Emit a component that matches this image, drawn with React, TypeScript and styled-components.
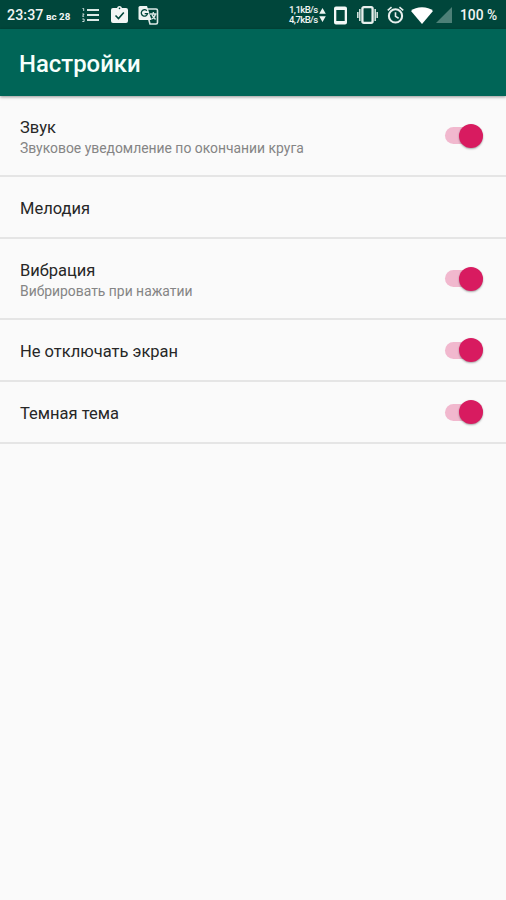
import React from "react";
import styled, { createGlobalStyle } from "styled-components";

const GlobalStyle = createGlobalStyle`
  * { box-sizing: border-box; }
  body { margin: 0; background: #fafafa; font-family: Roboto, sans-serif; }
`;

const Screen = styled.main`
  width: 506px;
  height: 900px;
  overflow: hidden;
  background: #fafafa;
`;

const StatusBar = styled.div`
  display: flex;
  align-items: center;
  justify-content: space-between;
  height: 29px;
  padding: 1px 9px 0 7px;
  background: #00463b;
  color: #f1f5f4;
`;

const StatusGroup = styled.div`
  display: flex;
  align-items: center;
  height: 100%;
`;

const Clock = styled.span`
  width: 37px;
  font-size: 14.2px;
  font-weight: 500;
  line-height: 28px;
  letter-spacing: 0.1px;
  white-space: nowrap;
`;

const DateLabel = styled.span`
  width: 26px;
  margin: 3px 10px 0 2px;
  font-size: 9.8px;
  font-weight: 700;
  white-space: nowrap;
`;

const Battery = styled.span`
  width: 37px;
  margin-left: 8px;
  font-size: 13.8px;
  font-weight: 500;
  white-space: nowrap;
`;

const Speed = styled.span`
  width: 30px;
  font-size: 9.6px;
  line-height: 10.5px;
  font-weight: 500;
  letter-spacing: -0.6px;
  white-space: nowrap;
`;

const Icon = styled.svg<{ $gap?: number }>`
  display: block;
  flex: none;
  margin-left: ${({ $gap }) => $gap ?? 0}px;
`;

const AppBar = styled.header`
  position: relative;
  display: flex;
  align-items: center;
  height: 67px;
  padding: 2px 19px 0;
  background: #006557;
  color: #f6fffc;
  box-shadow: 0 1px 3px rgba(0, 0, 0, 0.42);
`;

const Title = styled.h1`
  margin: 0;
  font-size: 23.9px;
  font-weight: 500;
  line-height: 32px;
`;

const Row = styled.section<{ $height: number }>`
  display: flex;
  align-items: center;
  justify-content: space-between;
  height: ${({ $height }) => $height}px;
  padding: 0 23px 0 20px;
  border-bottom: 2px solid #e5e5e5;
`;

const RowText = styled.div`
  padding-top: 3px;
`;

const Label = styled.div`
  color: #272727;
  font-size: 16.5px;
  line-height: 22px;
`;

const Summary = styled.div`
  color: #858585;
  font-size: 13.9px;
  line-height: 19px;
`;

const Track = styled.button`
  display: flex;
  align-items: center;
  justify-content: flex-end;
  width: 38px;
  height: 17px;
  padding: 0;
  border: 0;
  border-radius: 9px;
  background: #f1b8ce;
`;

const Thumb = styled.span`
  flex: none;
  width: 24px;
  height: 24px;
  border-radius: 50%;
  background: #d81b60;
  box-shadow: 0 1px 2px rgba(0, 0, 0, 0.35);
`;

const settings = [
  { label: "Звук", summary: "Звуковое уведомление по окончании круга", toggle: true, height: 81 },
  { label: "Мелодия", toggle: false, height: 62 },
  { label: "Вибрация", summary: "Вибрировать при нажатии", toggle: true, height: 81 },
  { label: "Не отключать экран", toggle: true, height: 62 },
  { label: "Темная тема", toggle: true, height: 62 },
];

export default function App() {
  return (
    <Screen>
      <GlobalStyle />
      <StatusBar>
        <StatusGroup>
          <Clock>23:37</Clock>
          <DateLabel>вс 28</DateLabel>
          <Icon width="17" height="16" viewBox="0 0 17 16">
            <path d="M5 3h12M5 8h12M5 13h12" stroke="#dce9e6" strokeWidth="2" />
            <path d="M.5 1.5h1.2V4M.3 7h1.8L.5 9.3h1.6M.3 12h1.8v2.5H.3" fill="none" stroke="#dce9e6" strokeWidth=".9" />
          </Icon>
          <Icon $gap={12} width="17" height="18" viewBox="0 0 17 18">
            <path d="M2 2h4a2.6 2.6 0 0 1 5 0h4q2 0 2 2v11q0 2-2 2H2q-2 0-2-2V4q0-2 2-2Z" fill="#f2f6f5" />
            <path d="m4.5 9.5 3 3 5.3-6" fill="none" stroke="#00463b" strokeWidth="1.6" />
            <circle cx="8.5" cy="2.4" r=".8" fill="#00463b" />
          </Icon>
          <Icon $gap={10} width="21" height="20" viewBox="0 0 21 20">
            <path d="M8 4h10q1.5 0 1.5 1.5v12q0 1.5-1.5 1.5h-6Z" fill="#00463b" stroke="#dce9e6" strokeWidth="1.6" />
            <path d="M2 1h7l4.5 14H2q-1.5 0-1.5-1.5v-11Q.5 1 2 1Z" fill="#eef4f2" />
            <path d="M8.8 5.7a3.2 3.2 0 1 0 .8 3H6.7" fill="none" stroke="#00463b" strokeWidth="1.3" />
            <path d="M12 9h6.5M15.3 7v2M17.5 9q-1 4-4 5M14 10l3.5 4.5" fill="none" stroke="#dce9e6" strokeWidth="1.3" />
          </Icon>
        </StatusGroup>
        <StatusGroup>
          <Speed>1,1kB/s<br />4,7kB/s</Speed>
          <Icon width="7" height="14" viewBox="0 0 7 14">
            <path d="m3.5 0 3.3 5.7H.2ZM.2 8.3h6.6L3.5 14Z" fill="#eef4f2" />
          </Icon>
          <Icon $gap={8} width="13" height="19" viewBox="0 0 13 19">
            <path fillRule="evenodd" d="M2 .5h9q2 0 2 2v14q0 2-2 2H2q-2 0-2-2v-14q0-2 2-2ZM2.3 4v11h8.4V4Z" fill="#f3f7f6" />
          </Icon>
          <Icon $gap={10} width="21" height="18" viewBox="0 0 21 18">
            <rect x="5.4" y="1.2" width="10.2" height="15.6" rx="1.5" fill="none" stroke="#e8efed" strokeWidth="2.3" />
            <path d="M2.8 3v12M18.2 3v12M.8 6v6M20.2 6v6" stroke="#cfdeda" strokeWidth="1.6" />
          </Icon>
          <Icon $gap={9} width="17" height="18" viewBox="0 0 18 19">
            <circle cx="9" cy="10.5" r="7" fill="none" stroke="#e8efed" strokeWidth="2.2" />
            <path d="M9 6.5v4.5l3.3 2M.8 4.5l4-3.4M17.2 4.5l-4-3.4" fill="none" stroke="#e8efed" strokeWidth="1.7" />
          </Icon>
          <Icon $gap={7} width="22" height="17" viewBox="0 0 22 17">
            <path d="M0 4Q4 .3 11 .3T22 4L11 17Z" fill="#fff" />
          </Icon>
          <Icon $gap={3} width="16" height="16" viewBox="0 0 16 16">
            <path d="M16 0v16H0Z" fill="#4d8077" />
          </Icon>
          <Battery>100 %</Battery>
        </StatusGroup>
      </StatusBar>
      <AppBar><Title>Настройки</Title></AppBar>
      {settings.map(({ label, summary, toggle, height }) => (
        <Row key={label} $height={height}>
          <RowText>
            <Label>{label}</Label>
            {summary && <Summary>{summary}</Summary>}
          </RowText>
          {toggle && <Track role="switch" aria-checked="true" aria-label={label}><Thumb /></Track>}
        </Row>
      ))}
    </Screen>
  );
}
